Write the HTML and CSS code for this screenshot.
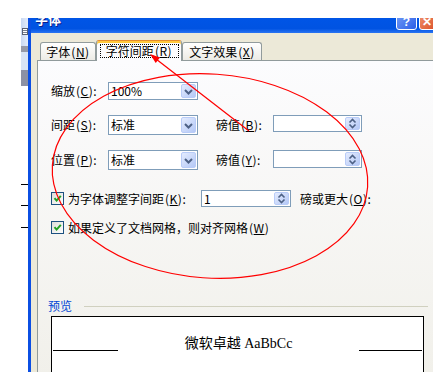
FILE: index.html
```html
<!DOCTYPE html>
<html lang="zh-CN">
<head>
<meta charset="utf-8">
<title>字体</title>
<link rel="stylesheet" href="styles.css">
</head>
<body>
<div class="screen">
  <div class="gap-left"></div>
  <div class="bgwin">
    <div class="bg-top"><span class="bg-icon"></span></div>
    <div class="bg-band"></div>
    <div class="bg-mid"></div>
    <div class="bg-dark"></div>
    <div class="tick t1"></div>
    <div class="tick t2"></div>
    <div class="tick t3"></div>
  </div>
  <div class="dialog">
    <div class="titlebar">
      <span class="title">字体</span>
      <span class="tb-btn help">?</span>
      <span class="tb-btn close">✕</span>
    </div>
    <div class="body">
      <div class="tabs">
        <div class="tab tab1">字体<span class="k">(<u>N</u>)</span></div>
        <div class="tab active"><span class="focus">字符间距<span class="k">(<u>R</u>)</span></span></div>
        <div class="tab tab3">文字效果<span class="k">(<u>X</u>)</span></div>
      </div>
      <div class="panel">
        <div class="grid">
          <span class="lbl r1">缩放<span class="k">(<u>C</u>)</span>:</span>
          <div class="combo r1"><span class="val">100%</span><span class="dd"><svg width="13" height="13" viewBox="0 0 13 13"><path d="M3 5l3.5 3.5L10 5" fill="none" stroke="#4D6185" stroke-width="2"/></svg></span></div>

          <span class="lbl r2">间距<span class="k">(<u>S</u>)</span>:</span>
          <div class="combo r2"><span class="val">标准</span><span class="dd"><svg width="13" height="13" viewBox="0 0 13 13"><path d="M3 5l3.5 3.5L10 5" fill="none" stroke="#4D6185" stroke-width="2"/></svg></span></div>
          <span class="lbl c4 r2">磅值<span class="k">(<u>B</u>)</span>:</span>
          <div class="spin c5 r2 h17"><span class="sb"><svg width="13" height="13" viewBox="0 0 13 13"><path d="M3.5 5.5L6.5 2.5L9.5 5.5M3.5 7.5L6.5 10.5L9.5 7.5" fill="none" stroke="#4D6185" stroke-width="1.6"/></svg></span></div>

          <span class="lbl r3">位置<span class="k">(<u>P</u>)</span>:</span>
          <div class="combo r3"><span class="val">标准</span><span class="dd"><svg width="13" height="13" viewBox="0 0 13 13"><path d="M3 5l3.5 3.5L10 5" fill="none" stroke="#4D6185" stroke-width="2"/></svg></span></div>
          <span class="lbl c4 r3">磅值<span class="k">(<u>Y</u>)</span>:</span>
          <div class="spin c5 r3 h18"><span class="sb"><svg width="13" height="13" viewBox="0 0 13 13"><path d="M3.5 5.5L6.5 2.5L9.5 5.5M3.5 7.5L6.5 10.5L9.5 7.5" fill="none" stroke="#4D6185" stroke-width="1.6"/></svg></span></div>
        </div>

        <div class="check-row cr1">
          <span class="cb"><svg width="11" height="11" viewBox="0 0 11 11"><path d="M2.5 5.2L4.6 7.6L8.8 2.8" fill="none" stroke="#21A121" stroke-width="2"/></svg></span>
          <span class="cr-label">为字体调整字间距<span class="k">(<u>K</u>)</span>:</span>
          <div class="spin sw"><span class="val">1</span><span class="sb"><svg width="13" height="13" viewBox="0 0 13 13"><path d="M3.5 5.5L6.5 2.5L9.5 5.5M3.5 7.5L6.5 10.5L9.5 7.5" fill="none" stroke="#4D6185" stroke-width="1.6"/></svg></span></div>
          <span class="after">磅或更大<span class="k">(<u>O</u>)</span>:</span>
        </div>
        <div class="check-row cr2">
          <span class="cb"><svg width="11" height="11" viewBox="0 0 11 11"><path d="M2.5 5.2L4.6 7.6L8.8 2.8" fill="none" stroke="#21A121" stroke-width="2"/></svg></span>
          <span class="cr-label">如果定义了文档网格，则对齐网格<span class="k">(<u>W</u>)</span></span>
        </div>

        <div class="pv-head"><span class="pv-label">预览</span><span class="pv-line"></span></div>
        <div class="pv-box">
          <span class="pv-rule l"></span>
          <span class="pv-text">微软卓越 AaBbCc</span>
          <span class="pv-rule r"></span>
        </div>
      </div>
    </div>
  </div>
</div>
<svg class="annot" width="444" height="372" viewBox="0 0 444 372">
  <ellipse cx="210" cy="176" rx="158" ry="102" transform="rotate(4 210 176)" fill="none" stroke="#FF0000" stroke-width="1.2"/>
  <line x1="249" y1="131" x2="156" y2="59" stroke="#FF0000" stroke-width="1.2"/>
  <polygon points="150,54 155.7,62.9 160,57.4" fill="#FF0000"/>
</svg>
</body>
</html>
```
FILE: styles.css
```css
* { box-sizing: border-box; }
html, body { margin: 0; padding: 0; }
body {
  width: 444px; height: 372px; overflow: hidden; position: relative;
  background: #fff; color: #000;
  font-family: "Noto Sans CJK SC", "Noto Sans", sans-serif;
  font-size: 12px; line-height: 14px;
}
u { text-decoration: underline; text-underline-offset: 1px; }
.k { margin-left: 1px; letter-spacing: 0.5px; }

.screen { display: flex; padding-top: 18px; height: 372px; }
.gap-left { width: 21px; flex: none; }

.bgwin { width: 7px; flex: none; display: flex; flex-direction: column; }
.bg-top { height: 28px; background: linear-gradient(90deg, #C9D8F2, #E3ECFA); padding: 10px 0 0 1px; }
.bg-icon { display: block; width: 6px; height: 7px; border: 1px solid #5A6070; background: repeating-linear-gradient(#fff 0 1px, #7A8090 1px 2px); }
.bg-band { height: 6px; background: #969AA8; }
.bg-mid { height: 18px; background: #D9E4F5; }
.bg-dark { height: 16px; background: #8C91A4; }
.tick { height: 1px; background: #000; flex: none; }
.t1 { margin-top: 98px; }
.t2 { margin-top: 20px; }
.t3 { margin-top: 21px; }

.dialog {
  width: 405px; flex: none; display: flex; flex-direction: column;
  border-left: 3px solid #0B4FE3; overflow: hidden;
}
.titlebar {
  height: 15px; flex: none; display: flex; align-items: flex-start; overflow: hidden;
  background: linear-gradient(#0055E6, #0053E2 70%, #2A74F2);
}
.title {
  margin: -6px 0 0 4px; font-weight: bold; font-size: 13px; line-height: 13px;
  color: #fff; text-shadow: 1px 1px 0 #0A1E8C;
}
.tb-btn {
  flex: none; width: 21px; height: 21px; margin-top: -9px;
  border: 1px solid #fff; border-radius: 3px; color: #fff;
  font: bold 12px/14px "Liberation Sans", sans-serif; text-align: center; padding-top: 5px;
}
.help { margin-left: auto; background: linear-gradient(135deg, #7AA2F7, #2B5EE8); }
.close { margin-left: 2px; margin-right: -7px; background: linear-gradient(135deg, #F29A74, #D94A22); text-align: left; padding-left: 2px; }

.body { flex: 1; background: #ECE9D8; padding-left: 6px; display: flex; flex-direction: column; }
.tabs {
  height: 27px; flex: none; display: flex; align-items: flex-end;
  padding-left: 3px; position: relative; z-index: 1;
}
.tab {
  height: 18px; flex: none; border: 1px solid #919B9C; border-bottom: none;
  border-radius: 3px 3px 0 0; background: linear-gradient(#FFFFFF, #ECEBE5);
  display: flex; align-items: center; justify-content: center; white-space: nowrap;
}
.tab1 { width: 56px; }
.tab3 { width: 80px; }
.tab.active {
  width: 86px; height: 21px; margin-bottom: -1px; align-items: flex-start;
  border-top-color: #E68B2C; box-shadow: inset 0 2px 0 #FFC83C; background: #FCFCFE;
}
.focus {
  width: 79px; height: 14px; margin-top: 3px; border: 1px dotted #000;
  text-align: center; line-height: 12px;
}

.panel {
  flex: 1; border-top: 1px solid #919B9C; border-left: 1px solid #919B9C;
  background: linear-gradient(#FCFCFE, #F1F0EA);
  padding: 21px 0 0 13px;
}
.grid {
  display: grid; grid-template-columns: 57px 90px 18px 57px 89px;
  grid-template-rows: 18px 20px 20px; row-gap: 15px; align-items: center;
}
.r1 { grid-row: 1; }
.r2 { grid-row: 2; }
.r3 { grid-row: 3; }
.lbl { grid-column: 1; white-space: nowrap; }
.lbl.c4 { grid-column: 4; }
.combo {
  grid-column: 2; align-self: stretch; border: 1px solid #7F9DB9; background: #fff;
  display: flex; align-items: center;
}
.val { padding-left: 2px; }
.dd, .sb {
  margin: 1px 1px 1px auto; width: 15px; align-self: stretch; flex: none;
  border: 1px solid #B9CCF8; border-radius: 2px;
  background: linear-gradient(135deg, #E4ECFE, #B4C8F6);
  display: flex; align-items: center; justify-content: center;
}
.spin {
  border: 1px solid #7F9DB9; background: #fff; display: flex; align-items: center;
}
.spin.c5 { grid-column: 5; align-self: start; }
.h17 { height: 17px; }
.h18 { height: 18px; }
.spin.sw { width: 90px; height: 17px; flex: none; }

.check-row { display: flex; align-items: center; white-space: nowrap; }
.cr1 { margin-top: 20px; height: 17px; }
.cr2 { margin-top: 14px; height: 13px; }
.cb {
  width: 13px; height: 13px; flex: none; border: 1px solid #1C5180;
  background: linear-gradient(135deg, #DCDCD7, #FFFFFF); display: flex;
}
.cr-label { margin-left: 4px; }
.cr1 .cr-label { width: 133px; flex: none; }
.after { margin-left: 9px; }

.pv-head { margin: 65px 0 0 -3px; height: 14px; display: flex; align-items: center; }
.pv-label { color: #0046D5; }
.pv-line { width: 344px; height: 1px; background: #D0D0BF; margin-left: 12px; }
.pv-box {
  margin-top: 3px; width: 373px; height: 60px; border: 1px solid #000; background: #fff;
  display: flex; align-items: flex-start;
}
.pv-rule { height: 1px; background: #000; margin-top: 33px; flex: none; }
.pv-rule.l { width: 65px; margin-left: 1px; }
.pv-rule.r { width: 63px; margin-right: 1px; }
.pv-text {
  flex: 1; text-align: center; margin-top: 19px; white-space: nowrap;
  font: 14px/16px "Liberation Serif", "Noto Sans CJK SC", serif;
}

.annot { position: absolute; left: 0; top: 0; z-index: 10; pointer-events: none; }
```
